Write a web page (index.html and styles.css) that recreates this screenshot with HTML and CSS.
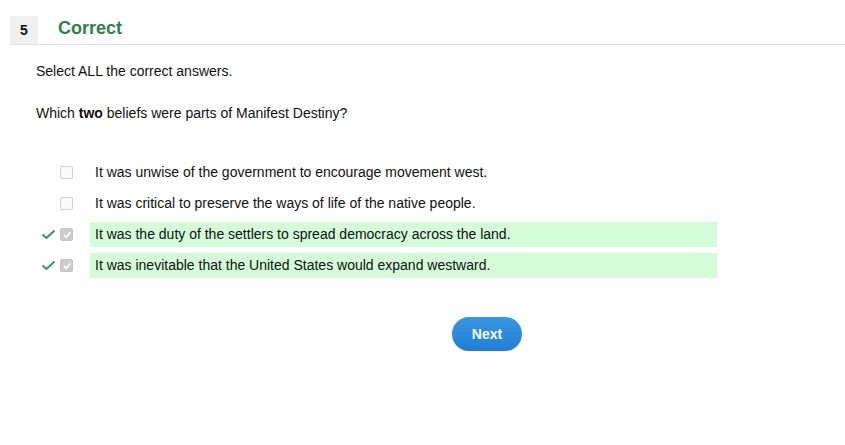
FILE: index.html
```html
<!DOCTYPE html>
<html>
<head>
<meta charset="utf-8">
<link rel="stylesheet" href="styles.css">
</head>
<body>
<div class="header">
  <div class="qnum">5</div>
  <div class="status">Correct</div>
</div>
<div class="content">
  <p class="instr">Select ALL the correct answers.</p>
  <p class="question">Which <b>two</b> beliefs were parts of Manifest Destiny?</p>
  <div class="answers">
    <div class="row">
      <span class="mark"></span>
      <span class="box"></span>
      <span class="text">It was unwise of the government to encourage movement west.</span>
    </div>
    <div class="row">
      <span class="mark"></span>
      <span class="box"></span>
      <span class="text">It was critical to preserve the ways of life of the native people.</span>
    </div>
    <div class="row correct">
      <span class="mark"><svg width="15" height="11" viewBox="0 0 15 11"><path d="M1.5 5.5 L5.5 9 L13.5 1.5" fill="none" stroke="#2e9a55" stroke-width="2"/></svg></span>
      <span class="box checked"><svg width="10" height="10" viewBox="0 0 10 10"><path d="M2 5 L4.2 7.2 L8.2 2.5" fill="none" stroke="#fff" stroke-width="1.6"/></svg></span>
      <span class="text">It was the duty of the settlers to spread democracy across the land.</span>
    </div>
    <div class="row correct">
      <span class="mark"><svg width="15" height="11" viewBox="0 0 15 11"><path d="M1.5 5.5 L5.5 9 L13.5 1.5" fill="none" stroke="#2e9a55" stroke-width="2"/></svg></span>
      <span class="box checked"><svg width="10" height="10" viewBox="0 0 10 10"><path d="M2 5 L4.2 7.2 L8.2 2.5" fill="none" stroke="#fff" stroke-width="1.6"/></svg></span>
      <span class="text">It was inevitable that the United States would expand westward.</span>
    </div>
  </div>
  <div class="actions">
    <button class="next">Next</button>
  </div>
</div>
</body>
</html>
```

FILE: styles.css
```css
body {
  margin: 0;
  background: #fff;
  font-family: "Liberation Sans", Arial, sans-serif;
  color: #111;
  font-size: 14px;
}
.header {
  display: flex;
  align-items: center;
  margin: 16px 0 0 10px;
  height: 28px;
  border-bottom: 1px solid #e4e4e4;
}
.qnum {
  width: 28px;
  height: 28px;
  background: #f0f0f0;
  display: flex;
  align-items: center;
  justify-content: center;
  font-weight: bold;
  font-size: 14px;
  color: #111;
}
.status {
  margin-left: 20px;
  font-size: 18px;
  font-weight: bold;
  color: #2a8248;
  position: relative;
  top: -2px;
}
.content {
  padding: 0 0 0 36px;
}
.instr {
  margin: 18px 0 0;
  line-height: 17px;
}
.question {
  margin: 25px 0 0;
  line-height: 17px;
}
.answers {
  margin-top: 38px;
  display: flex;
  flex-direction: column;
  gap: 6px;
}
.row {
  display: flex;
  align-items: center;
  height: 25px;
}
.mark {
  width: 24px;
  display: flex;
  align-items: center;
  justify-content: flex-start;
  padding-left: 5px;
  box-sizing: border-box;
}
.box {
  width: 13px;
  height: 13px;
  border: 1px solid #d2d2d2;
  border-radius: 2px;
  background: #fafafa;
  box-sizing: border-box;
  display: flex;
  align-items: center;
  justify-content: center;
}
.box.checked {
  background: #cccccc;
  border-color: #c4c4c4;
}
.text {
  margin-left: 17px;
  padding-left: 5px;
  width: 622px;
  height: 25px;
  line-height: 25px;
}
.row.correct .text {
  background: #d4fcd8;
}
.actions {
  display: flex;
  padding-left: 416px;
  margin-top: 39px;
}
.next {
  width: 70px;
  height: 34px;
  border: none;
  border-radius: 17px;
  background: linear-gradient(#3a97e0, #1f7fd6);
  color: #fff;
  font-family: "Liberation Sans", Arial, sans-serif;
  font-weight: bold;
  font-size: 14px;
  box-shadow: 0 1px 1px rgba(0,0,0,0.15);
}
```
